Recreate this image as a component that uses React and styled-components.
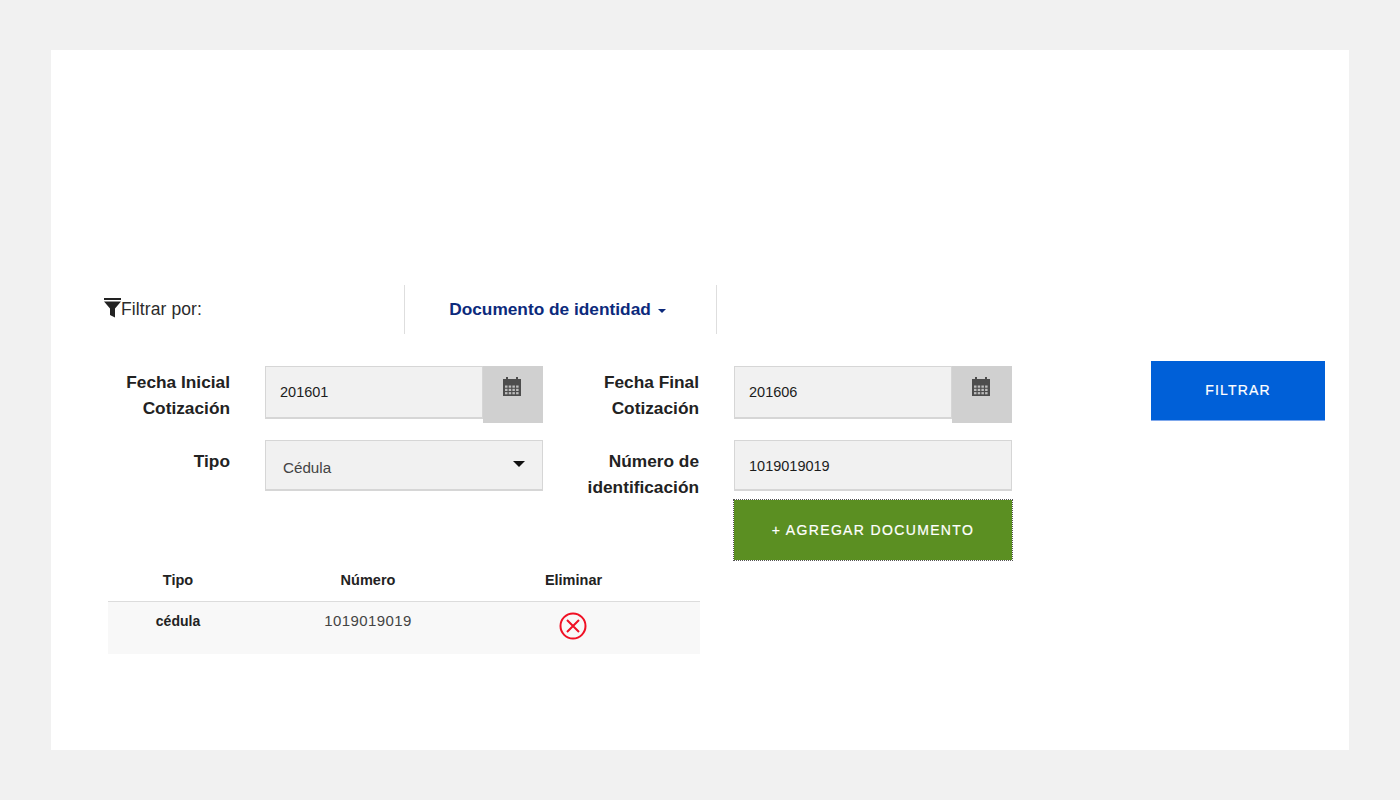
import React from 'react'
import styled, { createGlobalStyle } from 'styled-components'

const GlobalStyle = createGlobalStyle`
  html, body {
    margin: 0;
    padding: 0;
    background: #f1f1f1;
    font-family: "Liberation Sans", Arial, sans-serif;
    color: #222;
  }
`

const Page = styled.div`
  width: 1400px;
  height: 800px;
  box-sizing: border-box;
  padding: 50px 51px;
`

const Card = styled.main`
  height: 700px;
  box-sizing: border-box;
  background: #fff;
  padding: 235px 24px 0 53px;
`

const FilterBar = styled.div`
  display: flex;
  height: 49px;
`

const FilterLabel = styled.div`
  width: 300px;
  display: flex;
  align-items: flex-start;
  padding-top: 12px;
  box-sizing: border-box;
  font-size: 17.5px;
  line-height: 24px;
  letter-spacing: 0.1px;
  color: #2b2b2b;
  svg {
    flex: none;
    margin-top: 1px;
  }
`

const FilterTab = styled.div`
  width: 313px;
  box-sizing: border-box;
  border-left: 1px solid #dedede;
  border-right: 1px solid #dedede;
  display: flex;
  align-items: center;
  justify-content: center;
  gap: 7px;
  padding-right: 6px;
  font-size: 17.3px;
  font-weight: bold;
  color: #0c2a7c;
`

const TabCaret = styled.span`
  width: 0;
  height: 0;
  margin-top: 2px;
  border-left: 4.5px solid transparent;
  border-right: 4.5px solid transparent;
  border-top: 4.5px solid #0c2a7c;
`

const FormGrid = styled.div`
  display: grid;
  grid-template-columns: 157px 278px 191px 278px 313px;
  grid-template-rows: 57px 51px 52px;
  row-gap: 17px;
  margin: 32px 0 0 4px;
`

const Label = styled.label`
  padding: ${p => (p.$low ? '8px' : '3px')} 35px 0 0;
  text-align: right;
  font-size: 17.3px;
  line-height: 26px;
  font-weight: bold;
  color: #222;
`

const DateField = styled.div`
  display: flex;
  align-items: flex-start;
  height: 57px;
`

const Field = styled.div`
  flex: 1;
  min-width: 0;
  height: ${p => (p.$short ? '53px' : '51px')};
  box-sizing: border-box;
  display: flex;
  align-items: center;
  justify-content: space-between;
  padding: ${p => (p.$short ? '0' : p.$select ? '4px' : '1px')} 14px 0;
  padding-left: ${p => (p.$select ? '17px' : '14px')};
  padding-right: ${p => (p.$select ? '17px' : '14px')};
  background: #f1f1f1;
  border: 1px solid #d6d6d6;
  border-bottom-width: 2px;
  font-size: ${p => (p.$select ? '15.2px' : '14.5px')};
  color: ${p => (p.$select ? '#444' : '#1c1c1c')};
`

const CalendarButton = styled.button`
  flex: none;
  width: 60px;
  height: 57px;
  padding: 10px 3px 0 0;
  border: 0;
  background: #d0d0d0;
  display: flex;
  justify-content: center;
  align-items: flex-start;
`

const SelectCaret = styled.span`
  width: 0;
  height: 0;
  margin-top: -6px;
  border-left: 6px solid transparent;
  border-right: 6px solid transparent;
  border-top: 6px solid #111;
`

const FilterButton = styled.button`
  justify-self: end;
  width: 174px;
  height: 60px;
  margin-top: -5px;
  padding: 0 0 2px;
  border: 0;
  border-bottom: 1px solid #7fa8ec;
  background: #0060d8;
  color: #fff;
  font: 14px "Liberation Sans", Arial, sans-serif;
  letter-spacing: 1.2px;
  -webkit-text-stroke: 0.2px #fff;
`

const AddButton = styled.button`
  grid-column: 4;
  height: 60px;
  margin-top: -8px;
  border: 0;
  outline: 1px dotted #555;
  background: #5b8f22;
  color: #fff;
  font: 14px "Liberation Sans", Arial, sans-serif;
  letter-spacing: 1.35px;
  -webkit-text-stroke: 0.2px #fff;
`

const DocsTable = styled.table`
  width: 592px;
  margin: 8px 0 0 4px;
  border-collapse: collapse;
  table-layout: fixed;
  font-size: 14px;
`

const HeadCell = styled.th`
  height: 33px;
  box-sizing: border-box;
  padding: 2px 0 0;
  vertical-align: top;
  border-bottom: 1px solid #dcdcdc;
  font-size: 14.5px;
  font-weight: bold;
  line-height: 20px;
  color: #222;
  text-align: center;
`

const BodyCell = styled.td`
  height: 53px;
  box-sizing: border-box;
  padding: 9px 0 0;
  vertical-align: top;
  background: #f8f8f8;
  text-align: center;
  line-height: 20px;
  font-weight: ${p => (p.$strong ? 'bold' : 'normal')};
  color: ${p => (p.$strong ? '#222' : '#444')};
  font-size: ${p => (p.$strong ? '14px' : '15px')};
  letter-spacing: ${p => (p.$strong ? '0' : '0.4px')};
`

const RemoveButton = styled.span`
  display: block;
  width: 28px;
  height: 28px;
  margin: 1px auto 0;
  position: relative;
  left: -1px;
`

const FunnelIcon = () => (
  <svg width="17" height="20" viewBox="0 0 17 20">
    <rect x="0" y="0" width="17" height="2" fill="#222" />
    <path d="M0 3.500h17l-6 7v9l-5-2.500v-6.500z" fill="#222" />
  </svg>
)

const CalendarIcon = () => (
  <svg width="20" height="21" viewBox="0 0 20 21">
    <path d="M1 3h3V1h2v2h8V1h2v2h3v5H1z" fill="#4d4d4d" />
    <rect x="1" y="8" width="18" height="12" fill="#4d4d4d" />
    {[0, 1, 2, 3].map(c =>
      [0, 1, 2].map(r => (
        <rect
          key={`${c}-${r}`}
          x={3 + c * 3.7}
          y={9.500 + r * 3.3}
          width="2.500"
          height="2.200"
          fill="#bdbdbd"
        />
      ))
    )}
  </svg>
)

const RemoveIcon = () => (
  <svg width="28" height="28" viewBox="0 0 28 28">
    <circle cx="14" cy="14" r="12.500" fill="none" stroke="#f01024" strokeWidth="2" />
    <path d="M8 8l12 12M20 8L8 20" stroke="#f01024" strokeWidth="2" />
  </svg>
)

export default function App() {
  return (
    <Page>
      <GlobalStyle />
      <Card>
        <FilterBar>
          <FilterLabel>
            <FunnelIcon />
            Filtrar por:
          </FilterLabel>
          <FilterTab>
            Documento de identidad
            <TabCaret />
          </FilterTab>
        </FilterBar>

        <FormGrid>
          <Label>Fecha Inicial Cotización</Label>
          <DateField>
            <Field $short>201601</Field>
            <CalendarButton><CalendarIcon /></CalendarButton>
          </DateField>
          <Label>Fecha Final Cotización</Label>
          <DateField>
            <Field $short>201606</Field>
            <CalendarButton><CalendarIcon /></CalendarButton>
          </DateField>
          <FilterButton>FILTRAR</FilterButton>

          <Label $low>Tipo</Label>
          <Field $select>
            Cédula
            <SelectCaret />
          </Field>
          <Label $low>Número de identificación</Label>
          <Field>1019019019</Field>

          <AddButton>+ AGREGAR DOCUMENTO</AddButton>
        </FormGrid>

        <DocsTable>
          <colgroup>
            <col width="140" />
            <col width="240" />
            <col width="171" />
            <col width="41" />
          </colgroup>
          <thead>
            <tr>
              <HeadCell>Tipo</HeadCell>
              <HeadCell>Número</HeadCell>
              <HeadCell>Eliminar</HeadCell>
              <HeadCell />
            </tr>
          </thead>
          <tbody>
            <tr>
              <BodyCell $strong>cédula</BodyCell>
              <BodyCell>1019019019</BodyCell>
              <BodyCell><RemoveButton><RemoveIcon /></RemoveButton></BodyCell>
              <BodyCell />
            </tr>
          </tbody>
        </DocsTable>
      </Card>
    </Page>
  )
}
